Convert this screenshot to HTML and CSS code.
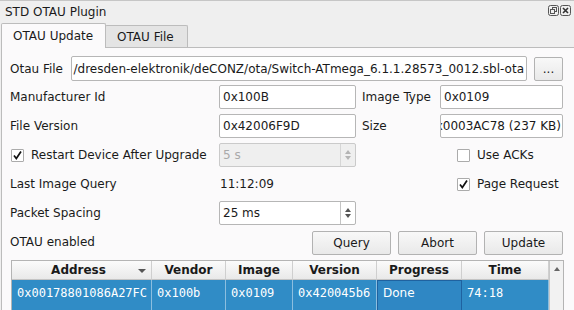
FILE: index.html
```html
<!DOCTYPE html>
<html lang="en">
<head>
    <meta charset="UTF-8">
    <title>STD OTAU Plugin</title>
    <link rel="stylesheet" href="styles.css">
</head>
<body>
<div class="window">
    <!-- title of the dock -->
    <div class="titlebar">
        <span class="title">STD OTAU Plugin</span>
        <span class="wbtns">
            <svg width="11" height="11" viewBox="0 0 11 11">
                <rect x="0.5" y="0.5" width="10" height="10" rx="2" fill="none" stroke="#555"/>
                <rect x="4.5" y="2.5" width="4" height="4" fill="none" stroke="#555"/>
                <rect x="2.5" y="4.5" width="4" height="4" fill="#f0f0f0" stroke="#555"/>
            </svg>
            <svg width="11" height="11" viewBox="0 0 11 11">
                <rect x="0.5" y="0.5" width="10" height="10" rx="2" fill="none" stroke="#555"/>
                <path d="M3 3 L8 8 M8 3 L3 8" stroke="#333" stroke-width="1.6"/>
            </svg>
        </span>
    </div>

    <div class="tabbar">
        <div class="tab active">OTAU Update</div>
        <div class="tab">OTAU File</div>
    </div>

    <div class="pane">
        <div class="filerow">
            <span class="lbl">Otau File</span>
            <div class="field path"><span>/dresden-elektronik/deCONZ/ota/Switch-ATmega_6.1.1.28573_0012.sbl-ota</span></div>
            <button class="btn dots">...</button>
        </div>

        <div class="form">
            <span class="lbl">Manufacturer Id</span>
            <div class="field"><span>0x100B</span></div>
            <span class="lbl lbl2">Image Type</span>
            <div class="field"><span>0x0109</span></div>

            <span class="lbl">File Version</span>
            <div class="field"><span>0x42006F9D</span></div>
            <span class="lbl lbl2">Size</span>
            <div class="field end"><span>0x0003AC78 (237 KB)</span></div>

            <label class="check">
                <span class="box"><svg width="11" height="11" viewBox="0 0 11 11"><path d="M2 5.5 L4.3 8.5 L9 1.5" fill="none" stroke="#111" stroke-width="1.7"/></svg></span>
                Restart Device After Upgrade
            </label>
            <div class="field spin disabled"><span>5 s</span><i class="arrows"><b class="up"></b><b class="dn"></b></i></div>
            <span></span>
            <label class="check inset"><span class="box"></span>Use ACKs</label>

            <span class="lbl">Last Image Query</span>
            <span class="value">11:12:09</span>
            <span></span>
            <label class="check inset">
                <span class="box"><svg width="11" height="11" viewBox="0 0 11 11"><path d="M2 5.5 L4.3 8.5 L9 1.5" fill="none" stroke="#111" stroke-width="1.7"/></svg></span>
                Page Request
            </label>

            <span class="lbl">Packet Spacing</span>
            <div class="field spin"><span>25 ms</span><i class="arrows"><b class="up"></b><b class="dn"></b></i></div>
            <span></span>
            <span></span>

            <span class="lbl">OTAU enabled</span>
            <div class="buttons">
                <button class="btn">Query</button>
                <button class="btn">Abort</button>
                <button class="btn">Update</button>
            </div>
        </div>

        <div class="table">
            <div class="grid">
                <div class="th sorted">Address<i class="sort"></i></div>
                <div class="th">Vendor</div>
                <div class="th">Image</div>
                <div class="th">Version</div>
                <div class="th">Progress</div>
                <div class="th">Time</div>

                <div class="td mono">0x00178801086A27FC</div>
                <div class="td mono">0x100b</div>
                <div class="td mono">0x0109</div>
                <div class="td mono">0x420045b6</div>
                <div class="td focus">Done</div>
                <div class="td mono">74:18</div>
            </div>
            <div class="scroll"><b class="up"></b></div>
        </div>
    </div>
</div>
</body>
</html>
```

FILE: styles.css
```css
/* dock widget, qt fusion look */
html, body { margin: 0; }
body { width: 574px; height: 310px; overflow: hidden; background: #efefef; font: 12px "DejaVu Sans", sans-serif; color: #1a1a1a; }

.window { height: 310px; border-top: 1px solid #c6c6c6; box-sizing: border-box; }

.titlebar { height: 21px; display: flex; align-items: center; justify-content: space-between; padding: 0 3px 0 5px; }
.title { margin-top: 1px; }
.wbtns { display: flex; gap: 1px; margin-top: -3px; }
.wbtns svg { display: block; }

.tabbar { display: flex; align-items: flex-end; height: 25px; padding-left: 1px; }
.tab { height: 21px; padding: 0 11px; display: flex; align-items: center; border: 1px solid #bcbcbc; border-bottom: none; background: #e4e4e4; border-radius: 2px 2px 0 0; }
.tab.active { height: 24px; width: 81px; background: #fbfafb; position: relative; z-index: 1; margin-bottom: -1px; }
.tab + .tab { margin-left: -1px; width: 59px; }

.pane { height: 300px; background: #fbfafb; border: 1px solid #bcbcbc; border-right: none; margin-left: 1px; padding: 8px 10px 0 8px; box-sizing: border-box; }

.lbl { display: flex; align-items: center; }
.lbl2 { padding-left: 6px; }
.value { display: flex; align-items: center; padding-left: 1px; }

.field { height: 24px; box-sizing: border-box; border: 1px solid #b6b6b6; border-radius: 2px; background: #fff; display: flex; align-items: center; padding: 0 3px; overflow: hidden; white-space: nowrap; }
.field.path { justify-content: flex-end; padding: 0 2px; }
.field.end { justify-content: flex-end; padding: 0 1px; }
.field.end span, .field.path span { flex: none; }

.filerow { display: flex; align-items: center; height: 25px; }
.filerow .lbl { width: 61px; }
.filerow .path { width: 456px; height: 25px; }
.btn { font: inherit; color: #1a1a1a; height: 24px; width: 79px; border: 1px solid #b2b2b2; border-radius: 2px; background: linear-gradient(#f8f8f8, #e9e9e9); padding: 0; }
.btn.dots { width: 29px; margin-left: 7px; }

.form { display: grid; grid-template-columns: 209px 137px 84px 123px; grid-auto-rows: 24px; row-gap: 5px; margin-top: 4px; }
.form .buttons { margin-top: 1px; }

.spin { position: relative; padding-right: 18px; }
.spin span { flex: 1; }
.arrows { position: absolute; right: 0; top: 0; bottom: 0; width: 14px; border-left: 1px solid #c4c4c4; display: flex; flex-direction: column; align-items: center; justify-content: center; gap: 2px; }
.arrows b, .scroll b { width: 0; height: 0; border-left: 3px solid transparent; border-right: 3px solid transparent; }
.arrows .up { border-bottom: 4px solid #555; }
.arrows .dn { border-top: 4px solid #555; }
.disabled { background: #efefef; border-color: #cacaca; color: #a9a9a9; }
.disabled .arrows { border-left-color: #d6d6d6; }
.disabled .arrows .up { border-bottom-color: #b4b4b4; }
.disabled .arrows .dn { border-top-color: #b4b4b4; }

.check { display: flex; align-items: center; gap: 7px; padding-left: 1px; }
.check.inset { padding-left: 17px; }
.box { width: 13px; height: 13px; box-sizing: border-box; border: 1px solid #ababab; border-radius: 1px; background: #fff; display: flex; align-items: center; justify-content: center; }
.box svg { display: block; }

.buttons { grid-column: 2 / 5; display: flex; justify-content: flex-end; gap: 7px; }

.table { margin: 6px 0 0 1px; height: 60px; border: 1px solid #b4b4b4; border-bottom: none; display: flex; background: #fff; }
.grid { display: grid; grid-template-columns: 140px 74px 67px 84px 85px 87px; grid-template-rows: 19px 32px; }
.th { font-weight: bold; text-align: center; line-height: 19px; background: linear-gradient(#fbfbfb, #e9e9e9); border-right: 1px solid #cfcfcf; border-bottom: 1px solid #c4c4c4; position: relative; }
.th.sorted { padding-right: 6px; }
.sort { position: absolute; right: 5px; top: 8px; width: 0; height: 0; border-left: 4px solid transparent; border-right: 4px solid transparent; border-top: 4px solid #555; }
.td { background: #308cc6; color: #fff; padding: 5px 0 0 5px; line-height: 16px; border-right: 1px solid #8cbedf; white-space: nowrap; overflow: hidden; }
.mono { font-family: "DejaVu Sans Mono", monospace; }
.td.focus { border: 1px solid #1f62a0; padding: 4px 0 0 5px; background: #2f87c4; }
.scroll { width: 14px; background: #f2f2f2; border-left: 1px solid #c8c8c8; display: flex; justify-content: center; padding-top: 6px; }
.scroll .up { border-bottom: 4px solid #666; }
```
